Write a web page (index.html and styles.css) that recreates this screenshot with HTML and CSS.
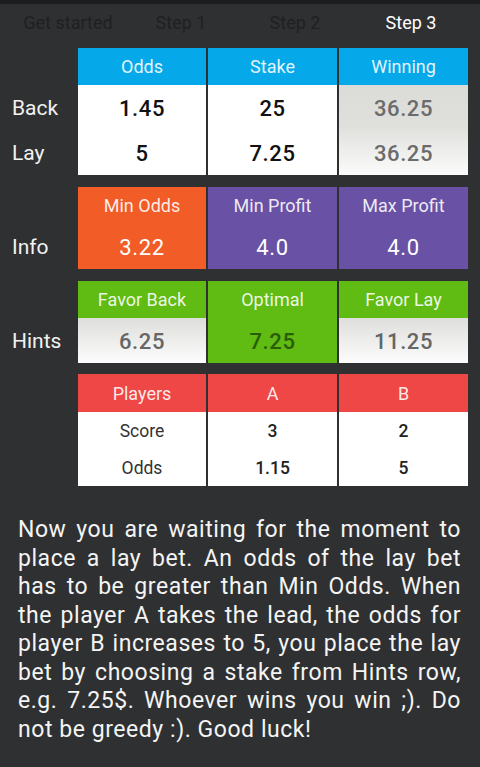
FILE: index.html
```html
<!DOCTYPE html>
<html>
<head>
<meta charset="utf-8">
<link rel="stylesheet" href="styles.css">
</head>
<body>
<div class="topstrip"></div>
<div class="tabs">
  <div class="tab t1">Get started</div>
  <div class="tab t2">Step 1</div>
  <div class="tab t3">Step 2</div>
  <div class="tab t4 active">Step 3</div>
</div>

<div class="grid s1">
  <div class="label"></div>
  <div class="hd blue">Odds</div>
  <div class="hd blue">Stake</div>
  <div class="hd blue">Winning</div>

  <div class="label">Back</div>
  <div class="val white">1.45</div>
  <div class="val white">25</div>
  <div class="val win1">36.25</div>

  <div class="label">Lay</div>
  <div class="val white">5</div>
  <div class="val white">7.25</div>
  <div class="val win2">36.25</div>
</div>

<div class="grid s2">
  <div class="label"></div>
  <div class="hd orange">Min Odds</div>
  <div class="hd purple">Min Profit</div>
  <div class="hd purple">Max Profit</div>

  <div class="label">Info</div>
  <div class="val orange light">3.22</div>
  <div class="val purple light">4.0</div>
  <div class="val purple light">4.0</div>
</div>

<div class="grid s3">
  <div class="label"></div>
  <div class="hd green">Favor Back</div>
  <div class="hd green">Optimal</div>
  <div class="hd green">Favor Lay</div>

  <div class="label">Hints</div>
  <div class="val hint">6.25</div>
  <div class="val green opt">7.25</div>
  <div class="val hint">11.25</div>
</div>

<div class="grid s4">
  <div class="label"></div>
  <div class="hd red">Players</div>
  <div class="hd red">A</div>
  <div class="hd red">B</div>

  <div class="label"></div>
  <div class="prow name">Score</div>
  <div class="prow num">3</div>
  <div class="prow num">2</div>

  <div class="label"></div>
  <div class="prow name">Odds</div>
  <div class="prow num">1.15</div>
  <div class="prow num">5</div>
</div>

<p class="desc">Now you are waiting for the moment to place a lay bet. An odds of the lay bet has to be greater than Min Odds. When the player A takes the lead, the odds for player B increases to 5, you place the lay bet by choosing a stake from Hints row, e.g. 7.25$. Whoever wins you win ;). Do not be greedy :). Good luck!</p>
</body>
</html>
```

FILE: styles.css
```css
html, body {
  margin: 0;
  padding: 0;
  background: #2f3032;
  font-family: Roboto, "Liberation Sans", sans-serif;
  width: 480px;
  height: 767px;
  overflow: hidden;
}

.topstrip {
  height: 4px;
  background: #1c1d1f;
}

.tabs {
  display: flex;
  height: 36px;
  align-items: center;
  font-size: 18px;
  color: #1f2022;
}

.tab { text-align: center; white-space: nowrap; }
.t1 { width: 136px; }
.t2 { width: 90px; }
.t3 { width: 138px; }
.t4 { width: 94px; }
.tab.active { color: #ffffff; }

.grid {
  display: grid;
  grid-template-columns: 76px 128px 129px 129px;
  column-gap: 2px;
  margin-top: 12px;
}
.s1 { margin-top: 8px; grid-template-rows: 37px 45px 45px; }
.s2 { grid-template-rows: 37px 45px; }
.s3 { grid-template-rows: 37px 45px; }
.s4 { margin-top: 11px; grid-template-rows: 38px 37px 37px; }

.label {
  display: flex;
  align-items: center;
  padding-left: 12px;
  font-size: 21px;
  color: #f2f2f2;
  padding-top: 1px;
}

.hd {
  display: flex;
  align-items: center;
  justify-content: center;
  font-size: 18px;
  color: rgba(255, 255, 255, 0.9);
}

.val {
  display: flex;
  align-items: center;
  justify-content: center;
  font-size: 22px;
  font-weight: 500;
  letter-spacing: 0.6px;
  padding-top: 1px;
}

.blue { background: #05a9e9; }
.orange { background: #f25c27; }
.purple { background: #6952a5; }
.green { background: #60bb12; }
.red { background: #ef4646; }

.white { background: #ffffff; color: #111111; }
.win1 { background: linear-gradient(#dbdcd7, #e0e1dd); color: #6b6b6b; }
.win2 { background: linear-gradient(#e2e3df, #fbfbfb); color: #6b6b6b; }
.light { color: #ffffff; font-weight: 400; }
.hint { background: linear-gradient(#dedfdc, #fcfcfc); color: #666666; }
.opt { color: #2a5d08; }

.prow {
  display: flex;
  align-items: center;
  justify-content: center;
  background: #ffffff;
  font-size: 17.5px;
}
.prow.name { color: #333333; font-weight: 400; }
.prow.num { color: #222222; font-weight: 500; }

.desc {
  margin: 30px 19px 0 18px;
  font-size: 23px;
  line-height: 28.5px;
  letter-spacing: 0.55px;
  color: #f4f4f4;
  text-align: justify;
}
```
